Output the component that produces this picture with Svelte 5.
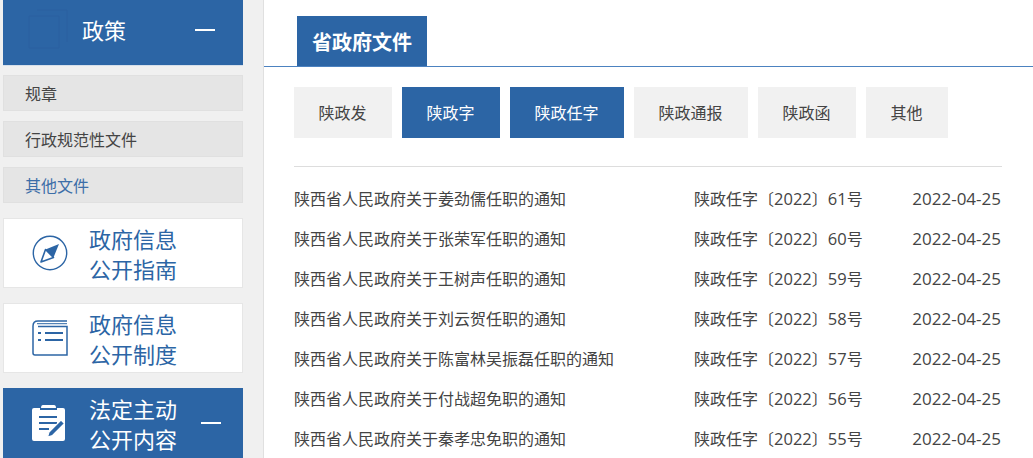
<script>
  const subs = [
    { name: '规章' },
    { name: '行政规范性文件' },
    { name: '其他文件', active: true }
  ];
  const tabs = [
    { name: '陕政发', w: 98 },
    { name: '陕政字', w: 98, on: true },
    { name: '陕政任字', w: 114, on: true },
    { name: '陕政通报', w: 114 },
    { name: '陕政函', w: 98 },
    { name: '其他', w: 82 }
  ];
  const rows = [
    ['陕西省人民政府关于姜劲儒任职的通知', 61],
    ['陕西省人民政府关于张荣军任职的通知', 60],
    ['陕西省人民政府关于王树声任职的通知', 59],
    ['陕西省人民政府关于刘云贺任职的通知', 58],
    ['陕西省人民政府关于陈富林吴振磊任职的通知', 57],
    ['陕西省人民政府关于付战超免职的通知', 56],
    ['陕西省人民政府关于秦孝忠免职的通知', 55]
  ];
</script>

<div class="page">
  <aside class="side">
    <div class="head">
      <svg class="watermark" width="44" height="44" viewBox="0 0 44 44" fill="none" stroke="#2a61a0">
        <path d="M2 8h30v32H2zM10 2h30v32" />
      </svg>
      <span class="head-title">政策</span>
      <span class="minus"></span>
    </div>
    <ul class="subs">
      {#each subs as s}
        <li class:active={s.active}>{s.name}</li>
      {/each}
    </ul>
    <div class="card">
      <svg class="ico" width="36" height="36" viewBox="0 0 36 36">
        <circle cx="18" cy="18" r="16.7" fill="none" stroke="#2c65a5" stroke-width="1.4" />
        <path d="M27 9 L21.5 22.5 L13.5 14.5 Z" fill="#2c65a5" />
        <path d="M9 27 L13.5 14.5 L21.5 22.5 Z" fill="none" stroke="#2c65a5" stroke-width="1.6" stroke-linejoin="round" />
      </svg>
      <div class="card-text">政府信息<br />公开指南</div>
    </div>
    <div class="card">
      <svg class="ico" width="36" height="36" viewBox="0 0 36 36" fill="none" stroke="#2c65a5" stroke-width="1.5">
        <path d="M35 1H6Q1 1 1 6v27q0 2 2 2h32V6.500H6" />
        <path d="M5 3.700h30" stroke-width="1" />
        <path d="M6 13h3M13 13h18M6 20h3M13 20h18" stroke-width="1.800" />
      </svg>
      <div class="card-text">政府信息<br />公开制度</div>
    </div>
    <div class="card card-blue">
      <svg class="ico" width="33" height="36" viewBox="0 0 33 36">
        <path d="M11 0h11q2 0 2 3H9q0-3 2-3z" fill="#fff" />
        <path d="M2 3h6v2h17V3h6q2 0 2 2v29q0 2-2 2H2q-2 0-2-2V5q0-2 2-2z" fill="#fff" />
        <path d="M7 12h18M7 18h18M7 24h10" stroke="#2c65a5" stroke-width="2" />
        <path d="M29 15l3.500 3.500-12 12-5 1.500 1.500-5z" fill="#2c65a5" stroke="#fff" stroke-width="1.200" />
      </svg>
      <div class="card-text">法定主动<br />公开内容</div>
      <span class="minus minus-card"></span>
    </div>
  </aside>

  <main class="main">
    <div class="title-bar"><h2>省政府文件</h2></div>
    <div class="tabs">
      {#each tabs as t}
        <button class:on={t.on} style="width:{t.w}px">{t.name}</button>
      {/each}
    </div>
    <ul class="list">
      {#each rows as [title, no]}
        <li>
          <span class="t">{title}</span>
          <span class="no">陕政任字〔<span class="num">2022</span>〕<span class="num">{no}</span>号</span>
          <span class="date">2022-04-25</span>
        </li>
      {/each}
    </ul>
  </main>
</div>

<style>
  :global(body) {
    margin: 0;
    background: #f0f0f0;
    overflow: hidden;
  }
  .page {
    display: flex;
    height: 458px;
    overflow: hidden;
    font-family: "Noto Sans CJK SC", "Open Sans", sans-serif;
    color: #444;
  }
  .side {
    width: 240px;
    flex: none;
    padding-left: 3px;
    padding-right: 20px;
    border-right: 1px solid #e0e0e0;
  }
  .head {
    height: 65px;
    background: #2c65a5;
    border-bottom: 1px solid #d5dfea;
    display: flex;
    align-items: center;
    color: #fff;
    position: relative;
  }
  .watermark {
    position: absolute;
    left: 24px;
    top: 8px;
  }
  .head-title {
    margin-left: 79px;
    font-size: 22px;
    line-height: 1;
    margin-bottom: 7px;
  }
  .minus {
    width: 20px;
    height: 2px;
    background: #fff;
    margin-left: auto;
    margin-right: 28px;
    margin-bottom: 6px;
  }
  .subs {
    list-style: none;
    margin: 9px 0 0;
    padding: 0;
  }
  .subs li {
    height: 34px;
    line-height: 35px;
    margin-bottom: 10px;
    padding-left: 21px;
    background: #e5e5e5;
    border: 1px solid #e0e0e0;
    font-size: 16px;
    color: #444;
  }
  .subs li.active {
    color: #3c6ea8;
  }
  .card {
    height: 68px;
    margin-top: 15px;
    background: #fff;
    border: 1px solid #e6e6e6;
    display: flex;
    align-items: center;
    color: #2c65a5;
  }
  .ico {
    margin-left: 28px;
    flex: none;
  }
  .card-text {
    margin-left: 21px;
    font-size: 22px;
    line-height: 30px;
  }
  .card-blue {
    background: #2c65a5;
    border-color: #2c65a5;
    color: #fff;
    height: 72px;
  }
  .card-blue .ico {
    margin-bottom: 4px;
  }
  .card-blue .card-text {
    margin-left: 24px;
    margin-bottom: 4px;
  }
  .minus-card {
    margin-right: 21px;
    margin-bottom: 4px;
  }
  .main {
    flex: 1;
    background: #fff;
    min-width: 0;
  }
  .title-bar {
    height: 67px;
    padding: 16px 0 0 33px;
    box-sizing: border-box;
    border-bottom: 1px solid #4c82c0;
  }
  h2 {
    margin: 0;
    width: 130px;
    height: 50px;
    line-height: 52px;
    background: #2c65a5;
    color: #fff;
    font-size: 20px;
    font-weight: 700;
    text-align: center;
  }
  .tabs {
    display: flex;
    gap: 10px;
    margin: 20px 31px 0 30px;
    padding-bottom: 28px;
    border-bottom: 1px solid #ddd;
  }
  .tabs button {
    height: 51px;
    border: 0;
    padding: 0 1px 1px 0;
    background: #f1f1f1;
    color: #444;
    font: inherit;
    font-size: 16px;
  }
  .tabs button.on {
    background: #2c65a5;
    color: #fff;
  }
  .list {
    list-style: none;
    margin: 11px 31px 0 30px;
    padding: 0;
  }
  .list li {
    height: 40px;
    line-height: 40px;
    display: flex;
    font-size: 16px;
    color: #444;
  }
  .t {
    width: 400px;
    flex: none;
  }
  .num {
    font-family: "Open Sans", sans-serif;
    font-size: 16.5px;
  }
  .date {
    font-family: "Open Sans", sans-serif;
    font-size: 17px;
    line-height: 42px;
    margin-left: auto;
    margin-right: 1px;
  }
</style>
